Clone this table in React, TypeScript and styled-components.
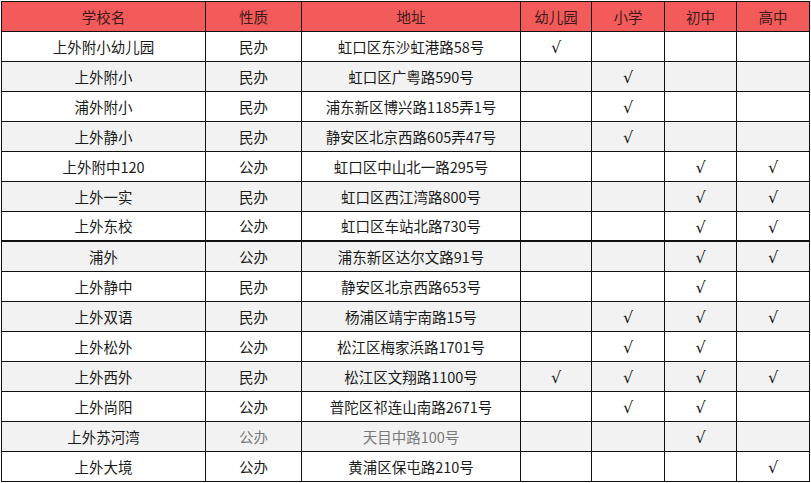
import React from "react";
import styled, { createGlobalStyle } from "styled-components";

const Global = createGlobalStyle`
  html, body { margin: 0; padding: 0; background: #ffffff; }
  body { font-family: "Microsoft YaHei", "Noto Sans CJK SC", "Noto Sans", sans-serif; }
`;

const Page = styled.div`
  padding: 1px 0 0 1px;
`;

const Table = styled.table`
  border-collapse: collapse;
  table-layout: fixed;
  width: 809px;
  font-size: 14.5px;
  color: #1a1a1a;
`;

const HeadCell = styled.th`
  background: #f35b5b;
  color: #3e1a1a;
  font-weight: normal;
  height: 29px;
  padding: 0;
  text-align: center;
  vertical-align: middle;
  border: 1px solid #111;
  line-height: 18px;
  overflow: hidden;
`;

const Row = styled.tr<{ $shade: boolean; $thick?: boolean }>`
  background: ${(p) => (p.$shade ? "#f2f2f2" : "#ffffff")};
  & > td {
    height: ${(p) => (p.$thick ? "28px" : "29px")};
    border-bottom: ${(p) => (p.$thick ? "2px solid #111" : "1px solid #111")};
  }
`;

const Cell = styled.td<{ $muted?: boolean }>`
  padding: 0;
  text-align: center;
  vertical-align: middle;
  border: 1px solid #111;
  line-height: 18px;
  white-space: nowrap;
  overflow: hidden;
  color: ${(p) => (p.$muted ? "#7a7a7a" : "#1a1a1a")};
`;

const Check = styled.span`
  display: inline-block;
  font-family: "DejaVu Sans", sans-serif;
  font-size: 16px;
  line-height: 16px;
  vertical-align: middle;
  color: #111;
`;

type School = {
  name: string;
  kind: string;
  addr: string;
  k: boolean;
  p: boolean;
  m: boolean;
  h: boolean;
  muted?: boolean;
};

const data: School[] = [
  { name: "上外附小幼儿园", kind: "民办", addr: "虹口区东沙虹港路58号", k: true, p: false, m: false, h: false },
  { name: "上外附小", kind: "民办", addr: "虹口区广粤路590号", k: false, p: true, m: false, h: false },
  { name: "浦外附小", kind: "民办", addr: "浦东新区博兴路1185弄1号", k: false, p: true, m: false, h: false },
  { name: "上外静小", kind: "民办", addr: "静安区北京西路605弄47号", k: false, p: true, m: false, h: false },
  { name: "上外附中120", kind: "公办", addr: "虹口区中山北一路295号", k: false, p: false, m: true, h: true },
  { name: "上外一实", kind: "民办", addr: "虹口区西江湾路800号", k: false, p: false, m: true, h: true },
  { name: "上外东校", kind: "公办", addr: "虹口区车站北路730号", k: false, p: false, m: true, h: true },
  { name: "浦外", kind: "公办", addr: "浦东新区达尔文路91号", k: false, p: false, m: true, h: true },
  { name: "上外静中", kind: "民办", addr: "静安区北京西路653号", k: false, p: false, m: true, h: false },
  { name: "上外双语", kind: "民办", addr: "杨浦区靖宇南路15号", k: false, p: true, m: true, h: true },
  { name: "上外松外", kind: "公办", addr: "松江区梅家浜路1701号", k: false, p: true, m: true, h: false },
  { name: "上外西外", kind: "民办", addr: "松江区文翔路1100号", k: true, p: true, m: true, h: true },
  { name: "上外尚阳", kind: "公办", addr: "普陀区祁连山南路2671号", k: false, p: true, m: true, h: false },
  { name: "上外苏河湾", kind: "公办", addr: "天目中路100号", k: false, p: false, m: true, h: false, muted: true },
  { name: "上外大境", kind: "公办", addr: "黄浦区保屯路210号", k: false, p: false, m: false, h: true },
];

const widths = [204, 96, 219, 71, 73, 72, 73];
const heads = ["学校名", "性质", "地址", "幼儿园", "小学", "初中", "高中"];

const Mark = ({ on }: { on: boolean }) => (on ? <Check>√</Check> : null);

export default function App() {
  return (
    <Page>
      <Global />
      <Table>
        <colgroup>
          {widths.map((w, i) => (
            <col key={i} style={{ width: w }} />
          ))}
        </colgroup>
        <thead>
          <tr>
            {heads.map((h) => (
              <HeadCell key={h}>{h}</HeadCell>
            ))}
          </tr>
        </thead>
        <tbody>
          {data.map((s, i) => (
            <Row key={s.name} $shade={i % 2 === 1} $thick={i === 6}>
              <Cell>{s.name}</Cell>
              <Cell $muted={s.muted}>{s.kind}</Cell>
              <Cell $muted={s.muted}>{s.addr}</Cell>
              <Cell><Mark on={s.k} /></Cell>
              <Cell><Mark on={s.p} /></Cell>
              <Cell><Mark on={s.m} /></Cell>
              <Cell><Mark on={s.h} /></Cell>
            </Row>
          ))}
        </tbody>
      </Table>
    </Page>
  );
}
